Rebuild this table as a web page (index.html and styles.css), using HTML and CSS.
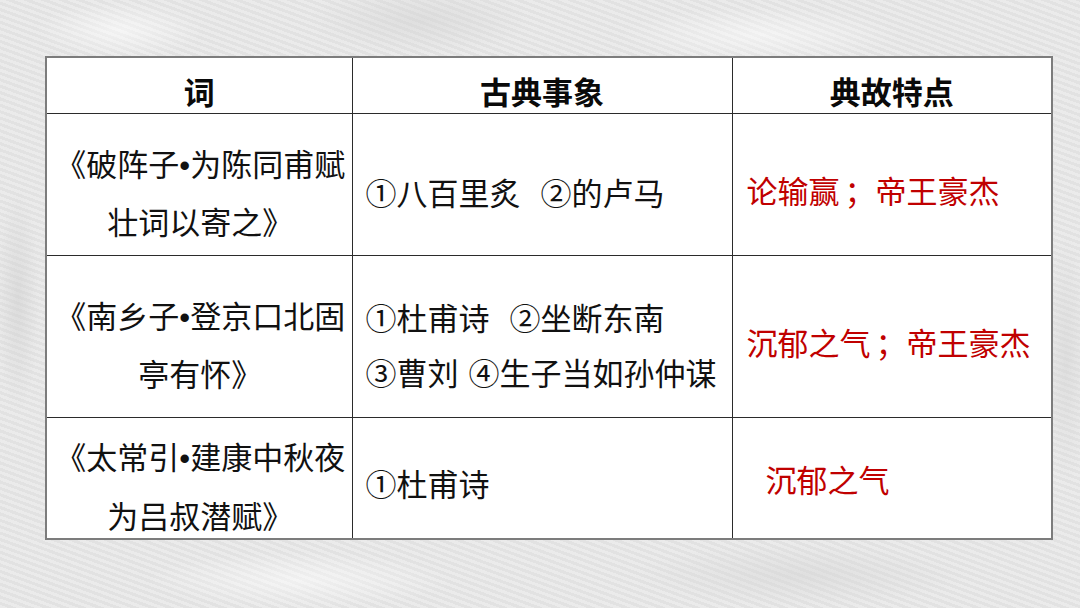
FILE: index.html
```html
<!DOCTYPE html>
<html lang="zh-CN">
<head>
<meta charset="utf-8">
<title>词 古典事象 典故特点</title>
<link rel="stylesheet" href="styles.css">
</head>
<body>
<main class="page">
  <table class="grid">
    <colgroup>
      <col class="c-ci">
      <col class="c-shi">
      <col class="c-te">
    </colgroup>
    <thead>
      <tr class="r-head">
        <th>词</th>
        <th>古典事象</th>
        <th>典故特点</th>
      </tr>
    </thead>
    <tbody>
      <tr class="r-1">
        <td class="title">《破阵子<span class="dot">•</span>为陈同甫赋<br>壮词以寄之》</td>
        <td class="items">①八百里炙 &nbsp;②的卢马</td>
        <td class="note">论输赢<span class="semi">；</span>帝王豪杰</td>
      </tr>
      <tr class="r-2">
        <td class="title">《南乡子<span class="dot">•</span>登京口北固<br>亭有怀》</td>
        <td class="items">①杜甫诗 &nbsp;②坐断东南<br>③曹刘 ④生子当如孙仲谋</td>
        <td class="note">沉郁之气<span class="semi">；</span>帝王豪杰</td>
      </tr>
      <tr class="r-3">
        <td class="title top"><div class="lines">《太常引<span class="dot">•</span>建康中秋夜<br>为吕叔潜赋》</div></td>
        <td class="items">①杜甫诗</td>
        <td class="note indent">沉郁之气</td>
      </tr>
    </tbody>
  </table>
</main>
</body>
</html>
```
FILE: styles.css
```css
html, body {
  margin: 0;
  padding: 0;
}

body {
  width: 1080px;
  height: 608px;
  overflow: hidden;
  background-color: #e9e9e9;
  background-image:
    radial-gradient(ellipse 120px 40px at 120px 30px, rgba(255,255,255,0.55), rgba(255,255,255,0) 70%),
    radial-gradient(ellipse 160px 50px at 420px 20px, rgba(210,210,210,0.5), rgba(210,210,210,0) 70%),
    radial-gradient(ellipse 200px 40px at 760px 35px, rgba(255,255,255,0.5), rgba(255,255,255,0) 70%),
    radial-gradient(ellipse 30px 160px at 18px 300px, rgba(205,205,205,0.5), rgba(205,205,205,0) 70%),
    radial-gradient(ellipse 30px 180px at 1066px 360px, rgba(210,210,210,0.5), rgba(210,210,210,0) 70%),
    radial-gradient(ellipse 220px 40px at 300px 580px, rgba(255,255,255,0.5), rgba(255,255,255,0) 70%),
    radial-gradient(ellipse 240px 45px at 800px 575px, rgba(212,212,212,0.5), rgba(212,212,212,0) 70%),
    repeating-linear-gradient(20deg, rgba(255,255,255,0.08) 0 3px, rgba(0,0,0,0.03) 3px 6px);
  font-family: "Noto Sans CJK SC", "Noto Sans", sans-serif;
  color: #111;
}

.page {
  padding: 56px 0 0 45px;
}

.grid {
  border-collapse: collapse;
  background: #fff;
  border: 2px solid #7c7c7c;
  table-layout: fixed;
  width: 1006px;
  font-size: 31px;
}

.c-ci { width: 306px; }
.c-shi { width: 380px; }
.c-te { width: 320px; }

.grid th,
.grid td {
  border: 1px solid #2b2b2b;
  padding: 15px 0 0 0;
  vertical-align: middle;
  line-height: 55px;
  white-space: nowrap;
}

.grid th {
  font-weight: 700;
  text-align: center;
  color: #0a0a0a;
  padding-top: 12px;
}

.r-head { height: 56px; }
.r-head th { line-height: 40px; }
.r-1 { height: 142px; }
.r-2 { height: 162px; }
.r-3 { height: 122px; }
.r-3 td { padding-top: 10px; }

.title {
  text-align: center;
  padding-left: 2px !important;
}

.r-3 .title.top {
  vertical-align: top;
  padding-top: 10px;
}

.lines {
  line-height: 56px;
  height: 104px;
}

.dot {
  font-family: "Liberation Sans", "DejaVu Sans", sans-serif;
}

.semi {
  padding-left: 5px;
}

.items {
  text-align: left;
  padding-left: 13px !important;
  word-spacing: 3px;
}

.note {
  color: #c00000;
  text-align: left;
  padding-left: 14px !important;
  padding-top: 11px !important;
}

.note.indent {
  padding-left: 33px !important;
  padding-top: 2px !important;
}
```
